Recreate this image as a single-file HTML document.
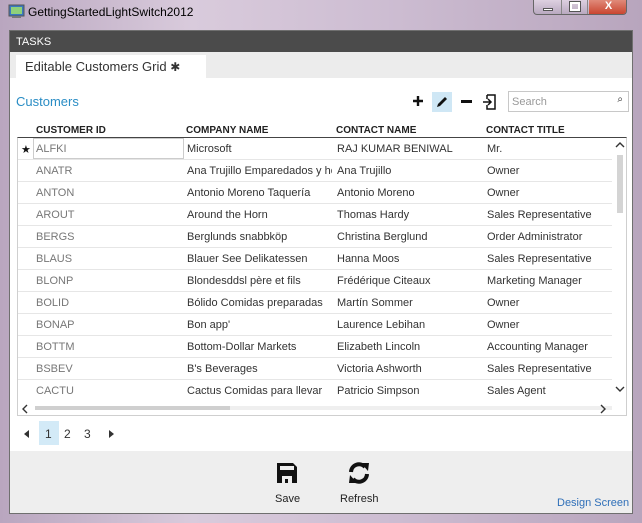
<!DOCTYPE html>
<html><head><meta charset="utf-8"><style>
*{margin:0;padding:0;box-sizing:border-box}
body{width:642px;height:523px;overflow:hidden;background:linear-gradient(90deg,#b9a6bf,#d9cbdc 30%,#cdbdd2 60%,#b8a5bd);font-family:"Liberation Sans",sans-serif;position:relative;font-size:11px}
.abs{position:absolute}
.title{left:28px;top:5px;font-size:12px;color:#000}
.win{left:9px;top:30px;width:624px;height:484px;background:#fff;border:1px solid #6f6f6f}
.tasks{left:0;top:0;width:622px;height:21px;background:#4b4b4b;color:#fff;font-size:11px;padding:5px 6px}
.tabrow{left:0;top:21px;width:622px;height:26px;background:#ececec}
.tab{left:6px;top:3px;width:190px;height:23px;background:#fff;font-size:13px;color:#333;padding:4px 9px}
.foot{left:0;top:420px;width:622px;height:62px;background:#eeeeee}
.row{position:absolute;left:0;width:594px;height:22px;border-bottom:1px solid #e6e6e6;font-size:11px;color:#333}
.row span{position:absolute;top:5px;white-space:nowrap}
.c1{left:18px;color:#777}.c2{left:169px;width:145px;overflow:hidden}.c3{left:319px}.c4{left:469px}
.hd{position:absolute;top:94px;font-size:10px;font-weight:bold;color:#222}
</style></head><body>
<svg class="abs" style="left:8px;top:4px" width="17" height="15"><rect x="1" y="1" width="15" height="11" fill="#3a78c0" stroke="#555"/><rect x="3" y="3" width="11" height="7" fill="#8fd07a"/><rect x="4" y="12" width="9" height="2" fill="#777"/></svg>
<div class="abs title">GettingStartedLightSwitch2012</div>
<div class="abs" style="left:533px;top:0;width:94px;height:15px;border:1px solid #666;border-top:none;border-radius:0 0 4px 4px;background:linear-gradient(#ddd0e0,#b9a9c0);overflow:hidden">
<div class="abs" style="left:0;top:0;width:28px;height:15px;border-right:1px solid #888"><div class="abs" style="left:9px;top:8px;width:10px;height:3px;background:#fff;border:1px solid #555"></div></div>
<div class="abs" style="left:28px;top:0;width:26px;height:15px;border-right:1px solid #888"><div class="abs" style="left:8px;top:2px;width:10px;height:9px;border:2px solid #fff;outline:1px solid #555"></div></div>
<div class="abs" style="left:55px;top:0;width:39px;height:15px;background:linear-gradient(#e08a7a,#c8412b);color:#fff;font-weight:bold;font-size:11px;text-align:center;line-height:13px">X</div></div>
<div class="abs win">
<div class="abs tasks">TASKS</div>
<div class="abs tabrow"><div class="abs tab">Editable Customers Grid <span style="font-size:12px">✱</span></div></div>
<div class="abs" style="left:6px;top:63px;font-size:13px;color:#2a8dc5">Customers</div>
<svg class="abs" style="left:402px;top:64px" width="12" height="12"><path d="M6 1 V11 M1 6 H11" stroke="#111" stroke-width="2.4"/></svg>
<div class="abs" style="left:422px;top:61px;width:20px;height:20px;background:#cfe7f5"><svg width="20" height="20"><path d="M5 15 L6 12 L13 5 L15 7 L8 14 Z" fill="#111"/></svg></div>
<div class="abs" style="left:451px;top:69px;width:11px;height:3px;background:#111"></div>
<svg class="abs" style="left:472px;top:62px" width="16" height="18"><path d="M5 2 H13 V16 H5 V12 M5 6 V2" fill="none" stroke="#111" stroke-width="1.5"/><path d="M1 9 H9 M6 6 L9 9 L6 12" fill="none" stroke="#111" stroke-width="1.5"/></svg>
<div class="abs" style="left:498px;top:60px;width:121px;height:21px;border:1px solid #c8c8c8;color:#999;font-size:11px;padding:4px 3px">Search<span class="abs" style="right:5px;top:2px;color:#222;font-size:10px">⌕</span></div>
<div class="hd" style="left:26px">CUSTOMER ID</div><div class="hd" style="left:176px">COMPANY NAME</div><div class="hd" style="left:326px">CONTACT NAME</div><div class="hd" style="left:476px">CONTACT TITLE</div>
<div class="abs" style="left:7px;top:106px;width:610px;height:279px;border:1px solid #cfcfcf;border-top:1px solid #444;overflow:hidden">
<div class="row" style="top:0"><span style="left:3px;color:#111">★</span><span class="abs" style="left:15px;top:0;width:151px;height:21px;border:1px solid #ccc"></span><span class="c1">ALFKI</span><span class="c2">Microsoft</span><span class="c3">RAJ KUMAR BENIWAL</span><span class="c4">Mr.</span></div>
<div class="row" style="top:22px"><span class="c1">ANATR</span><span class="c2">Ana Trujillo Emparedados y helados</span><span class="c3">Ana Trujillo</span><span class="c4">Owner</span></div>
<div class="row" style="top:44px"><span class="c1">ANTON</span><span class="c2">Antonio Moreno Taquería</span><span class="c3">Antonio Moreno</span><span class="c4">Owner</span></div>
<div class="row" style="top:66px"><span class="c1">AROUT</span><span class="c2">Around the Horn</span><span class="c3">Thomas Hardy</span><span class="c4">Sales Representative</span></div>
<div class="row" style="top:88px"><span class="c1">BERGS</span><span class="c2">Berglunds snabbköp</span><span class="c3">Christina Berglund</span><span class="c4">Order Administrator</span></div>
<div class="row" style="top:110px"><span class="c1">BLAUS</span><span class="c2">Blauer See Delikatessen</span><span class="c3">Hanna Moos</span><span class="c4">Sales Representative</span></div>
<div class="row" style="top:132px"><span class="c1">BLONP</span><span class="c2">Blondesddsl père et fils</span><span class="c3">Frédérique Citeaux</span><span class="c4">Marketing Manager</span></div>
<div class="row" style="top:154px"><span class="c1">BOLID</span><span class="c2">Bólido Comidas preparadas</span><span class="c3">Martín Sommer</span><span class="c4">Owner</span></div>
<div class="row" style="top:176px"><span class="c1">BONAP</span><span class="c2">Bon app'</span><span class="c3">Laurence Lebihan</span><span class="c4">Owner</span></div>
<div class="row" style="top:198px"><span class="c1">BOTTM</span><span class="c2">Bottom-Dollar Markets</span><span class="c3">Elizabeth Lincoln</span><span class="c4">Accounting Manager</span></div>
<div class="row" style="top:220px"><span class="c1">BSBEV</span><span class="c2">B's Beverages</span><span class="c3">Victoria Ashworth</span><span class="c4">Sales Representative</span></div>
<div class="row" style="top:242px;border:none"><span class="c1">CACTU</span><span class="c2">Cactus Comidas para llevar</span><span class="c3">Patricio Simpson</span><span class="c4">Sales Agent</span></div>
<svg class="abs" style="left:596px;top:2px" width="12" height="10"><path d="M2 7 L6 3 L10 7" fill="none" stroke="#333" stroke-width="1.4"/></svg>
<div class="abs" style="left:599px;top:17px;width:6px;height:58px;background:#d4d4d4"></div>
<svg class="abs" style="left:596px;top:246px" width="12" height="10"><path d="M2 3 L6 7 L10 3" fill="none" stroke="#333" stroke-width="1.4"/></svg>
<svg class="abs" style="left:2px;top:265px" width="10" height="12"><path d="M7 2 L3 6 L7 10" fill="none" stroke="#333" stroke-width="1.4"/></svg>
<div class="abs" style="left:17px;top:268px;width:577px;height:4px;background:#efefef"><div style="width:195px;height:4px;background:#cfcfcf"></div></div>
<svg class="abs" style="left:580px;top:265px" width="10" height="12"><path d="M3 2 L7 6 L3 10" fill="none" stroke="#333" stroke-width="1.4"/></svg>
</div>
<svg class="abs" style="left:13px;top:398px" width="8" height="10"><path d="M6 1 L1 5 L6 9Z" fill="#333"/></svg>
<div class="abs" style="left:29px;top:390px;width:20px;height:24px;background:#d3eaf7"></div>
<div class="abs" style="left:35px;top:396px;font-size:12px;color:#333">1</div>
<div class="abs" style="left:54px;top:396px;font-size:12px;color:#333">2</div>
<div class="abs" style="left:74px;top:396px;font-size:12px;color:#333">3</div>
<svg class="abs" style="left:97px;top:398px" width="8" height="10"><path d="M2 1 L7 5 L2 9Z" fill="#333"/></svg>
<div class="abs foot">
<svg class="abs" style="left:266px;top:11px" width="22" height="22"><path d="M1 1 H17 L21 5 V21 H1 Z" fill="#111"/><rect x="4" y="4" width="14" height="4" fill="#eee"/><rect x="6" y="14" width="10" height="7" fill="#eee"/><rect x="9" y="17" width="3" height="4" fill="#111"/></svg>
<div class="abs" style="left:265px;top:42px;font-size:11px;color:#222">Save</div>
<svg class="abs" style="left:337px;top:10px" width="24" height="24"><path d="M4 11 A8 8 0 0 1 18 6" fill="none" stroke="#111" stroke-width="4"/><path d="M14 2 L22 2 L21 10 Z" fill="#111"/><path d="M20 13 A8 8 0 0 1 6 18" fill="none" stroke="#111" stroke-width="4"/><path d="M10 22 L2 22 L3 14 Z" fill="#111"/></svg>
<div class="abs" style="left:330px;top:42px;font-size:11px;color:#222">Refresh</div>
<div class="abs" style="left:547px;top:46px;font-size:11px;color:#2f6fb8">Design Screen</div>
</div>
</div>
</body></html>
